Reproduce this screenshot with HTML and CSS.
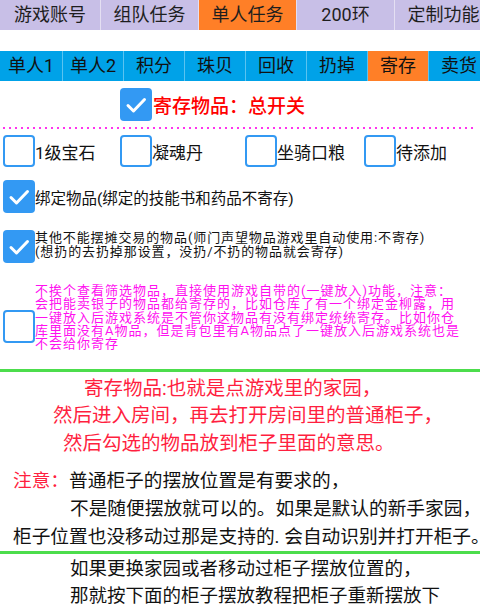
FILE: index.html
```html
<!DOCTYPE html>
<html>
<head>
<meta charset="utf-8">
<link rel="stylesheet" href="styles.css">
</head>
<body>
<div class="page">
  <div class="tabs1">
    <div class="t1 w100">游戏账号</div>
    <div class="t1">组队任务</div>
    <div class="t1 on">单人任务</div>
    <div class="t1">200环</div>
    <div class="t1">定制功能</div>
  </div>
  <div class="tabs2">
    <div class="t2">单人1</div>
    <div class="t2">单人2</div>
    <div class="t2">积分</div>
    <div class="t2">珠贝</div>
    <div class="t2">回收</div>
    <div class="t2">扔掉</div>
    <div class="t2 on">寄存</div>
    <div class="t2">卖货</div>
  </div>

  <div class="master">
    <span class="cb checked"><svg viewBox="0 0 32 33" width="32" height="33"><path d="M8 17.5 L13.5 23 L24.5 11.5" fill="none" stroke="#fff" stroke-width="3" stroke-linecap="round" stroke-linejoin="round"/></svg></span>
    <span class="master-label">寄存物品：总开关</span>
  </div>
  <div class="dots"></div>

  <div class="checkrow">
    <div class="ci c1"><span class="cb"></span><span>1级宝石</span></div>
    <div class="ci c2"><span class="cb"></span><span>凝魂丹</span></div>
    <div class="ci c3"><span class="cb"></span><span>坐骑口粮</span></div>
    <div class="ci c4"><span class="cb"></span><span>待添加</span></div>
  </div>

  <div class="bind1">
    <span class="cb checked"><svg viewBox="0 0 32 33" width="32" height="33"><path d="M8 17.5 L13.5 23 L24.5 11.5" fill="none" stroke="#fff" stroke-width="3" stroke-linecap="round" stroke-linejoin="round"/></svg></span>
    <span class="bind1-label">绑定物品(绑定的技能书和药品不寄存)</span>
  </div>

  <div class="bind2">
    <span class="cb checked"><svg viewBox="0 0 32 33" width="32" height="33"><path d="M8 17.5 L13.5 23 L24.5 11.5" fill="none" stroke="#fff" stroke-width="3" stroke-linecap="round" stroke-linejoin="round"/></svg></span>
    <span class="small-label">其他不能摆摊交易的物品(师门声望物品游戏里自动使用:不寄存)<br>(想扔的去扔掉那设置，没扔/不扔的物品就会寄存)</span>
  </div>

  <div class="pinkrow">
    <span class="cb pinkbox"></span>
    <span class="pink-label">不挨个查看筛选物品，直接使用游戏自带的(一键放入)功能，注意：<br>会把能卖银子的物品都给寄存的，比如仓库了有一个绑定金柳露，用<br>一键放入后游戏系统是不管你这物品有没有绑定统统寄存。比如你仓<br>库里面没有A物品，但是背包里有A物品点了一键放入后游戏系统也是<br>不会给你寄存</span>
  </div>

  <div class="green"></div>

  <div class="redpara">
    <div class="rl r1">寄存物品:也就是点游戏里的家园，</div>
    <div class="rl r2">然后进入房间，再去打开房间里的普通柜子，</div>
    <div class="rl r3">然后勾选的物品放到柜子里面的意思。</div>
  </div>

  <div class="note">
    <div class="nl"><span class="note-key">注意：</span><span>普通柜子的摆放位置是有要求的，</span></div>
    <div class="nl ind">不是随便摆放就可以的。如果是默认的新手家园，</div>
    <div class="nl">柜子位置也没移动过那是支持的. 会自动识别并打开柜子。</div>
  </div>

  <div class="green g2"></div>

  <div class="final">
    <div class="nl ind">如果更换家园或者移动过柜子摆放位置的，</div>
    <div class="nl ind">那就按下面的柜子摆放教程把柜子重新摆放下</div>
  </div>
</div>
</body>
</html>
```

FILE: styles.css
```css
html, body {
  margin: 0;
  padding: 0;
  background: #ffffff;
}
body {
  font-family: Roboto, "Noto Sans CJK SC", sans-serif;
  color: #111111;
}
.page {
  width: 480px;
  height: 608px;
  overflow: hidden;
}
.tabs1 {
  display: flex;
  height: 30px;
  gap: 1px;
  background: #e4dff2;
  overflow: hidden;
}
.t1 {
  flex: 0 0 97px;
  background: #c8bfe7;
  font-size: 18px;
  line-height: 30px;
  text-align: center;
  color: #1e1e1e;
  white-space: nowrap;
}
.t1.w100 { flex-basis: 100px; }
.t1.on { background: #ff7f27; }

.tabs2 {
  display: flex;
  height: 30px;
  margin-top: 21px;
  gap: 1px;
  background: #5bc3f0;
  overflow: hidden;
}
.t2 {
  flex: 0 0 60px;
  background: #00a2e8;
  font-size: 18px;
  line-height: 30px;
  text-align: center;
  color: #111111;
  white-space: nowrap;
}
.t2:first-child { flex-basis: 62px; }
.t2.on { background: #ff7f27; }

.cb {
  flex: 0 0 auto;
  box-sizing: border-box;
  width: 32px;
  height: 33px;
  border: 2px solid #3399f3;
  border-radius: 4px;
  background: #ffffff;
  display: block;
}
.cb.checked {
  background: #3399f3;
  border: none;
}
.cb svg { display: block; }

.master {
  display: flex;
  align-items: center;
  margin-top: 7px;
  padding-left: 120px;
  height: 33px;
}
.master-label {
  color: #ff0000;
  font-size: 19px;
  font-weight: 500;
  padding-left: 1px;
}
.dots {
  margin: 6px 0 0 3px;
  width: 472px;
  height: 2px;
  background: repeating-linear-gradient(to right, #ff33ee 0 2px, transparent 2px 6px);
}

.checkrow {
  display: flex;
  margin-top: 6px;
  padding-left: 3px;
  height: 32px;
}
.ci {
  display: flex;
  align-items: center;
  font-size: 17px;
}
.ci .cb { height: 32px; }
.c1 { width: 117px; }
.c2 { width: 125px; }
.c3 { width: 119px; }
.c4 { width: 110px; }

.bind1 {
  display: flex;
  align-items: center;
  margin-top: 13px;
  padding-left: 3px;
  height: 33px;
}
.bind1-label {
  font-size: 15.5px;
  white-space: nowrap;
}
.bind2 {
  display: flex;
  align-items: center;
  margin-top: 17px;
  padding-left: 3px;
  height: 33px;
}
.small-label {
  font-size: 13px;
  letter-spacing: 0.9px;
  line-height: 13.3px;
  white-space: nowrap;
  margin-top: -4px;
}

.pinkrow {
  display: flex;
  align-items: flex-start;
  margin-top: 20px;
  padding-left: 3px;
  height: 80px;
}
.pinkbox { margin-top: 27px; }
.pink-label {
  color: #ff10f0;
  font-size: 13px;
  letter-spacing: 1px;
  line-height: 13.3px;
  white-space: nowrap;
  padding-top: 1px;
}

.green {
  margin-top: 6px;
  height: 3px;
  background: #4cdd4c;
}
.green.g2 { margin-top: 0; }

.redpara {
  margin-top: 2.5px;
  color: #ff1f3f;
  font-size: 19.5px;
  line-height: 27.5px;
  white-space: nowrap;
}
.r1 { padding-left: 84px; }
.r2 { padding-left: 53px; }
.r3 { padding-left: 63px; }

.note {
  margin-top: 10px;
  font-size: 18.7px;
  line-height: 28px;
  white-space: nowrap;
}
.nl { padding-left: 13px; white-space: nowrap; }
.nl.ind { padding-left: 70px; }
.note-key { color: #ff1f3f; }

.final {
  margin-top: 1.5px;
  font-size: 18.5px;
  line-height: 27px;
}
```
